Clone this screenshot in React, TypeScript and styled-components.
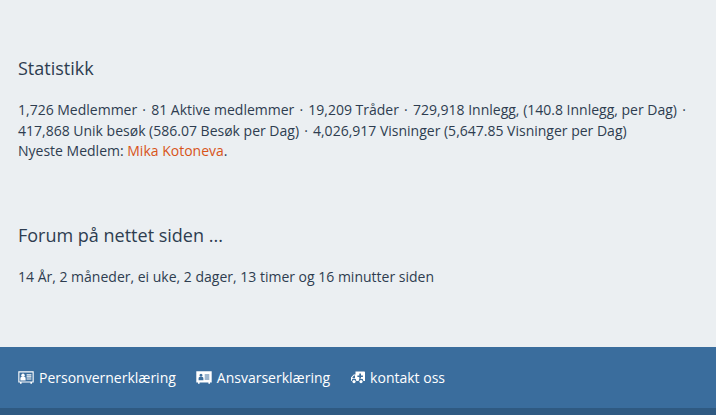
import React from 'react';
import styled, { createGlobalStyle } from 'styled-components';

const GlobalStyle = createGlobalStyle`
  html, body {
    margin: 0;
    padding: 0;
    height: 100%;
    overflow: hidden;
    background-color: #ebeff2;
  }
`;

// font-awesome 4 style glyphs, the package only has the newer shapes
const CardOutlineIcon = () => (
  <svg width="16" height="13" viewBox="0 0 16 13" fill="#fff">
    <path
      fillRule="evenodd"
      d="M0.3 0.3H15.7V11.5H14V12.7H12.4V11.5H3.6V12.7H2V11.5H0.3ZM1.4 1.4V10.4H14.6V1.4Z"
    />
    <circle cx="5" cy="4.2" r="1.7" />
    <path d="M2.4 9.4V7.4C2.4 6.5 3 5.8 3.9 5.8H6.1C7 5.8 7.6 6.5 7.6 7.4V9.4Z" />
    <path d="M8.6 3.2H13.4V4.4H8.6ZM8.6 5.3H13.4V6.5H8.6ZM8.6 7.4H13.4V8.6H8.6Z" />
  </svg>
);

const CardSolidIcon = () => (
  <svg width="16" height="13" viewBox="0 0 16 13" fill="#fff">
    <path
      fillRule="evenodd"
      d="M0.3 0.3H15.7V11.5H14V12.7H12.4V11.5H3.6V12.7H2V11.5H0.3ZM5 2.7A1.5 1.5 0 1 0 5 5.7A1.5 1.5 0 1 0 5 2.7ZM4 6C3.2 6 2.6 6.5 2.6 7.4V9.2H7.4V7.4C7.4 6.5 6.8 6 6 6ZM8.7 3.4V4.4H13.3V3.4ZM8.7 5.5V6.5H13.3V5.5ZM8.7 7.6V8.6H13.3V7.6Z"
    />
  </svg>
);

const AmbulanceIcon = () => (
  <svg width="15" height="13" viewBox="0 0 15 13" fill="#fff">
    <path
      fillRule="evenodd"
      d="M5.5 0.5H14C14.6 0.5 15 0.9 15 1.5V10H13.4A2.4 2.4 0 0 0 8.6 10H6.4A2.4 2.4 0 0 0 1.6 10H1V6.6L3.8 3.4H5.5ZM9.3 2.4V4.4H7.4V6H9.3V8H11V6H12.9V4.4H11V2.4ZM4 4.6L2.4 6.5V7H5V4.6Z"
    />
    <circle cx="4" cy="10.6" r="1.6" />
    <circle cx="11" cy="10.6" r="1.6" />
  </svg>
);

const App: React.FC = () => {
  return (
    <Page>
      <GlobalStyle />
      <Main>
        <Section>
          <Heading>Statistikk</Heading>
          <Text>
            1,726 Medlemmer <Dot>·</Dot> 81 Aktive medlemmer <Dot>·</Dot> 19,209 Tråder <Dot>·</Dot> 729,918 Innlegg, (140.8 Innlegg, per Dag) <Dot>·</Dot>
            <br />
            417,868 Unik besøk (586.07 Besøk per Dag) <Dot>·</Dot> 4,026,917 Visninger (5,647.85 Visninger per Dag)
            <br />
            Nyeste Medlem: <MemberLink href="#">Mika Kotoneva</MemberLink>.
          </Text>
        </Section>
        <Section>
          <Heading>Forum på nettet siden ...</Heading>
          <Text>14 År, 2 måneder, ei uke, 2 dager, 13 timer og 16 minutter siden</Text>
        </Section>
      </Main>
      <Footer>
        <FooterLinks>
          <FooterLink href="#"><CardOutlineIcon />Personvernerklæring</FooterLink>
          <FooterLink href="#"><CardSolidIcon />Ansvarserklæring</FooterLink>
          <FooterLink href="#"><AmbulanceIcon />kontakt oss</FooterLink>
        </FooterLinks>
        <FooterBottom />
      </Footer>
    </Page>
  );
};

const Page = styled.div`
  display: flex;
  flex-direction: column;
  height: 415px;
  font-family: "Open Sans", "Liberation Sans", sans-serif;
  color: #2e3d50;
`;

const Main = styled.main`
  flex: 1;
  padding: 56px 18px 0;
  display: flex;
  flex-direction: column;
  gap: 61px;
`;

const Section = styled.section`
  display: flex;
  flex-direction: column;
  gap: 19px;
`;

const Heading = styled.h2`
  margin: 0;
  font-size: 18px;
  font-weight: 400;
  line-height: 25px;
  color: #2e3d50;
`;

const Text = styled.p`
  margin: 0;
  font-size: 14px;
  line-height: 20.5px;
`;

const Dot = styled.span`
  margin: 0 1.5px;
`;

const MemberLink = styled.a`
  color: #d8541a;
  text-decoration: none;
`;

const Footer = styled.footer`
  background-color: #3a6d9d;
`;

const FooterLinks = styled.nav`
  display: flex;
  align-items: center;
  gap: 20px;
  height: 61px;
  padding: 0 18px;
`;

const FooterLink = styled.a`
  display: flex;
  align-items: center;
  gap: 5px;
  color: #ffffff;
  font-size: 14px;
  text-decoration: none;
`;

const FooterBottom = styled.div`
  height: 7px;
  background-color: #2f5a82;
`;

export default App;
